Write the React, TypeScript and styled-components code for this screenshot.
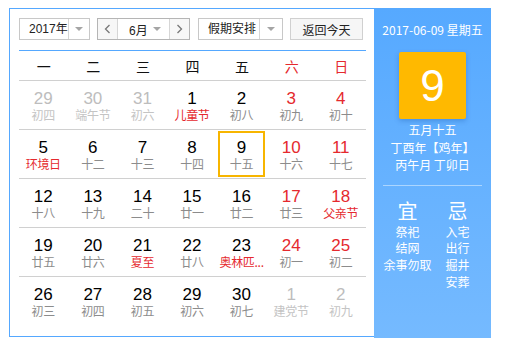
import React from 'react'
import styled, { createGlobalStyle } from 'styled-components'

const GlobalStyle = createGlobalStyle`
  body {
    margin: 0;
    background: #fff;
    font-family: "Liberation Sans", "Noto Sans CJK SC", sans-serif;
  }
`

const RED = '#e5292e'
const BLUE = '#55a8ff'

type Day = {
  n: number
  l: string
  other?: boolean
  weekend?: boolean
  fest?: boolean
  selected?: boolean
}

const weeks: Day[][] = [
  [
    { n: 29, l: '初四', other: true },
    { n: 30, l: '端午节', other: true },
    { n: 31, l: '初六', other: true },
    { n: 1, l: '儿童节', fest: true },
    { n: 2, l: '初八' },
    { n: 3, l: '初九', weekend: true },
    { n: 4, l: '初十', weekend: true },
  ],
  [
    { n: 5, l: '环境日', fest: true },
    { n: 6, l: '十二' },
    { n: 7, l: '十三' },
    { n: 8, l: '十四' },
    { n: 9, l: '十五', selected: true },
    { n: 10, l: '十六', weekend: true },
    { n: 11, l: '十七', weekend: true },
  ],
  [
    { n: 12, l: '十八' },
    { n: 13, l: '十九' },
    { n: 14, l: '二十' },
    { n: 15, l: '廿一' },
    { n: 16, l: '廿二' },
    { n: 17, l: '廿三', weekend: true },
    { n: 18, l: '父亲节', weekend: true, fest: true },
  ],
  [
    { n: 19, l: '廿五' },
    { n: 20, l: '廿六' },
    { n: 21, l: '夏至', fest: true },
    { n: 22, l: '廿八' },
    { n: 23, l: '奥林匹...', fest: true },
    { n: 24, l: '初一', weekend: true },
    { n: 25, l: '初二', weekend: true },
  ],
  [
    { n: 26, l: '初三' },
    { n: 27, l: '初四' },
    { n: 28, l: '初五' },
    { n: 29, l: '初六' },
    { n: 30, l: '初七' },
    { n: 1, l: '建党节', other: true },
    { n: 2, l: '初九', other: true },
  ],
]

const weekdays = ['一', '二', '三', '四', '五', '六', '日']

const Page = styled.div`
  padding: 8px 0 0 9px;
`

const Calendar = styled.div`
  display: flex;
  width: 482px;
  height: 330px;
`

const Main = styled.div`
  width: 365px;
  height: 329px;
  box-sizing: border-box;
  border: 1px solid ${BLUE};
  border-right: none;
  padding: 9px 8px 0 9px;
`

const Toolbar = styled.div`
  display: flex;
  height: 22px;
  padding-bottom: 10px;
  border-bottom: 1px solid ${BLUE};
  font-family: "Liberation Sans", "Noto Sans CJK SC", sans-serif;
  font-size: 12px;
  color: #222;
`

const Select = styled.div<{ $w: number; $gap?: number; $dark?: boolean }>`
  display: flex;
  width: ${(p) => p.$w}px;
  height: 22px;
  box-sizing: border-box;
  border: 1px solid ${(p) => (p.$dark ? '#b5b5b5' : '#c8c8c8')};
  margin-right: ${(p) => p.$gap ?? 0}px;
  background: #fff;
`

const SelectText = styled.div`
  flex: 1;
  display: flex;
  align-items: center;
  padding-left: 9px;
  line-height: 20px;
  white-space: nowrap;
`

const ArrowBox = styled.div`
  width: 22px;
  display: flex;
  align-items: center;
  justify-content: center;
  border-left: 1px solid #d6d6d6;
`

const Caret = styled.span`
  width: 0;
  height: 0;
  border-left: 4px solid transparent;
  border-right: 4px solid transparent;
  border-top: 4px solid #a5a5a5;
`

const NavBtn = styled.div<{ $side: 'l' | 'r' }>`
  width: 19px;
  display: flex;
  align-items: center;
  justify-content: center;
  background: #f7f7f7;
  ${(p) => (p.$side === 'l' ? 'border-right' : 'border-left')}: 1px solid #d6d6d6;
`

const MonthText = styled.div`
  flex: 1;
  display: flex;
  align-items: center;
  justify-content: space-between;
  padding: 0 8px 0 11px;
`

const Button = styled.div`
  width: 73px;
  height: 22px;
  box-sizing: border-box;
  border: 1px solid #d0d0d0;
  background: #f6f6f6;
  display: flex;
  align-items: center;
  justify-content: center;
`

const WeekHead = styled.div`
  display: grid;
  grid-template-columns: repeat(7, 1fr);
  height: 29px;
  border-bottom: 1px solid #d0d0d0;
`

const WeekName = styled.div<{ $red?: boolean }>`
  display: flex;
  align-items: center;
  justify-content: center;
  font-family: "Noto Sans CJK SC", sans-serif;
  font-size: 14px;
  color: ${(p) => (p.$red ? RED : '#111')};
`

const Week = styled.div<{ $last?: boolean }>`
  display: grid;
  grid-template-columns: repeat(7, 1fr);
  height: 48px;
  border-bottom: ${(p) => (p.$last ? 'none' : '1px solid #d0d0d0')};
`

const Cell = styled.div<{ $sel?: boolean }>`
  margin: 1px 2px 1px 1px;
  border: 2px solid ${(p) => (p.$sel ? '#f7b500' : 'transparent')};
  display: flex;
  flex-direction: column;
  align-items: center;
  padding-top: 6px;
  min-width: 0;
`

const Num = styled.div<{ $c: string }>`
  font-size: 17px;
  line-height: 18px;
  color: ${(p) => p.$c};
`

const Lunar = styled.div<{ $c: string }>`
  font-family: "Noto Sans CJK SC", sans-serif;
  font-size: 12px;
  line-height: 14px;
  color: ${(p) => p.$c};
  white-space: nowrap;
  letter-spacing: -0.3px;
`

const Side = styled.div`
  width: 117px;
  height: 330px;
  box-sizing: border-box;
  background: linear-gradient(180deg, #56a9ff 0%, #75baff 100%);
  color: #fff;
  font-family: "Noto Sans CJK SC", sans-serif;
  display: flex;
  flex-direction: column;
  align-items: center;
  padding: 13px 9px 0;
`

const DateLine = styled.div`
  font-size: 12px;
  line-height: 18px;
  white-space: nowrap;
`

const BigDay = styled.div`
  margin-top: 13px;
  width: 67px;
  height: 67px;
  border-radius: 2px;
  background: #ffb900;
  box-shadow: 0 2px 5px rgba(0, 60, 140, 0.25);
  display: flex;
  align-items: center;
  justify-content: center;
  font-family: "Liberation Sans", sans-serif;
  font-size: 44px;
  color: #fff;
`

const LunarInfo = styled.div`
  margin-top: 2px;
  font-size: 12px;
  line-height: 17.5px;
  text-align: center;
  white-space: nowrap;
`

const Divider = styled.div`
  margin-top: 11px;
  width: 99px;
  height: 1px;
  background: rgba(255, 255, 255, 0.45);
`

const Advice = styled.div`
  margin-top: 13px;
  display: grid;
  grid-template-columns: 50px 50px;
`

const AdviceCol = styled.div`
  display: flex;
  flex-direction: column;
  align-items: center;
`

const AdviceHead = styled.div`
  font-size: 20px;
  line-height: 24px;
  margin-bottom: 1px;
`

const AdviceItem = styled.div`
  font-size: 12px;
  line-height: 16.7px;
  white-space: nowrap;
`

const Chevron = ({ dir }: { dir: 'l' | 'r' }) => (
  <svg width="7" height="10" viewBox="0 0 7 10">
    <polyline
      points={dir === 'l' ? '5.5,1 1.5,5 5.5,9' : '1.5,1 5.5,5 1.5,9'}
      fill="none"
      stroke="#777"
      strokeWidth="1.3"
    />
  </svg>
)

const dayColors = (d: Day) => {
  if (d.other) return { num: '#bdbdbd', lunar: '#c4c4c4' }
  return {
    num: d.weekend ? RED : '#000',
    lunar: d.fest ? RED : '#8c8c8c',
  }
}

export default function App() {
  return (
    <>
      <GlobalStyle />
      <Page>
        <Calendar>
          <Main>
            <Toolbar>
              <Select $w={71} $gap={7}>
                <SelectText>2017年</SelectText>
                <ArrowBox>
                  <Caret />
                </ArrowBox>
              </Select>
              <Select $w={93} $gap={8} $dark>
                <NavBtn $side="l">
                  <Chevron dir="l" />
                </NavBtn>
                <MonthText>
                  <span>6月</span>
                  <Caret />
                </MonthText>
                <NavBtn $side="r">
                  <Chevron dir="r" />
                </NavBtn>
              </Select>
              <Select $w={85} $gap={7}>
                <SelectText>假期安排</SelectText>
                <ArrowBox>
                  <Caret />
                </ArrowBox>
              </Select>
              <Button>返回今天</Button>
            </Toolbar>
            <WeekHead>
              {weekdays.map((w, i) => (
                <WeekName key={w} $red={i >= 5}>
                  {w}
                </WeekName>
              ))}
            </WeekHead>
            {weeks.map((week, wi) => (
              <Week key={wi} $last={wi === weeks.length - 1}>
                {week.map((d, di) => {
                  const c = dayColors(d)
                  return (
                    <Cell key={di} $sel={d.selected}>
                      <Num $c={c.num}>{d.n}</Num>
                      <Lunar $c={c.lunar}>{d.l}</Lunar>
                    </Cell>
                  )
                })}
              </Week>
            ))}
          </Main>
          <Side>
            <DateLine>2017-06-09 星期五</DateLine>
            <BigDay>9</BigDay>
            <LunarInfo>
              <div>五月十五</div>
              <div>丁酉年【鸡年】</div>
              <div>丙午月 丁卯日</div>
            </LunarInfo>
            <Divider />
            <Advice>
              <AdviceCol>
                <AdviceHead>宜</AdviceHead>
                <AdviceItem>祭祀</AdviceItem>
                <AdviceItem>结网</AdviceItem>
                <AdviceItem>余事勿取</AdviceItem>
              </AdviceCol>
              <AdviceCol>
                <AdviceHead>忌</AdviceHead>
                <AdviceItem>入宅</AdviceItem>
                <AdviceItem>出行</AdviceItem>
                <AdviceItem>掘井</AdviceItem>
                <AdviceItem>安葬</AdviceItem>
              </AdviceCol>
            </Advice>
          </Side>
        </Calendar>
      </Page>
    </>
  )
}
